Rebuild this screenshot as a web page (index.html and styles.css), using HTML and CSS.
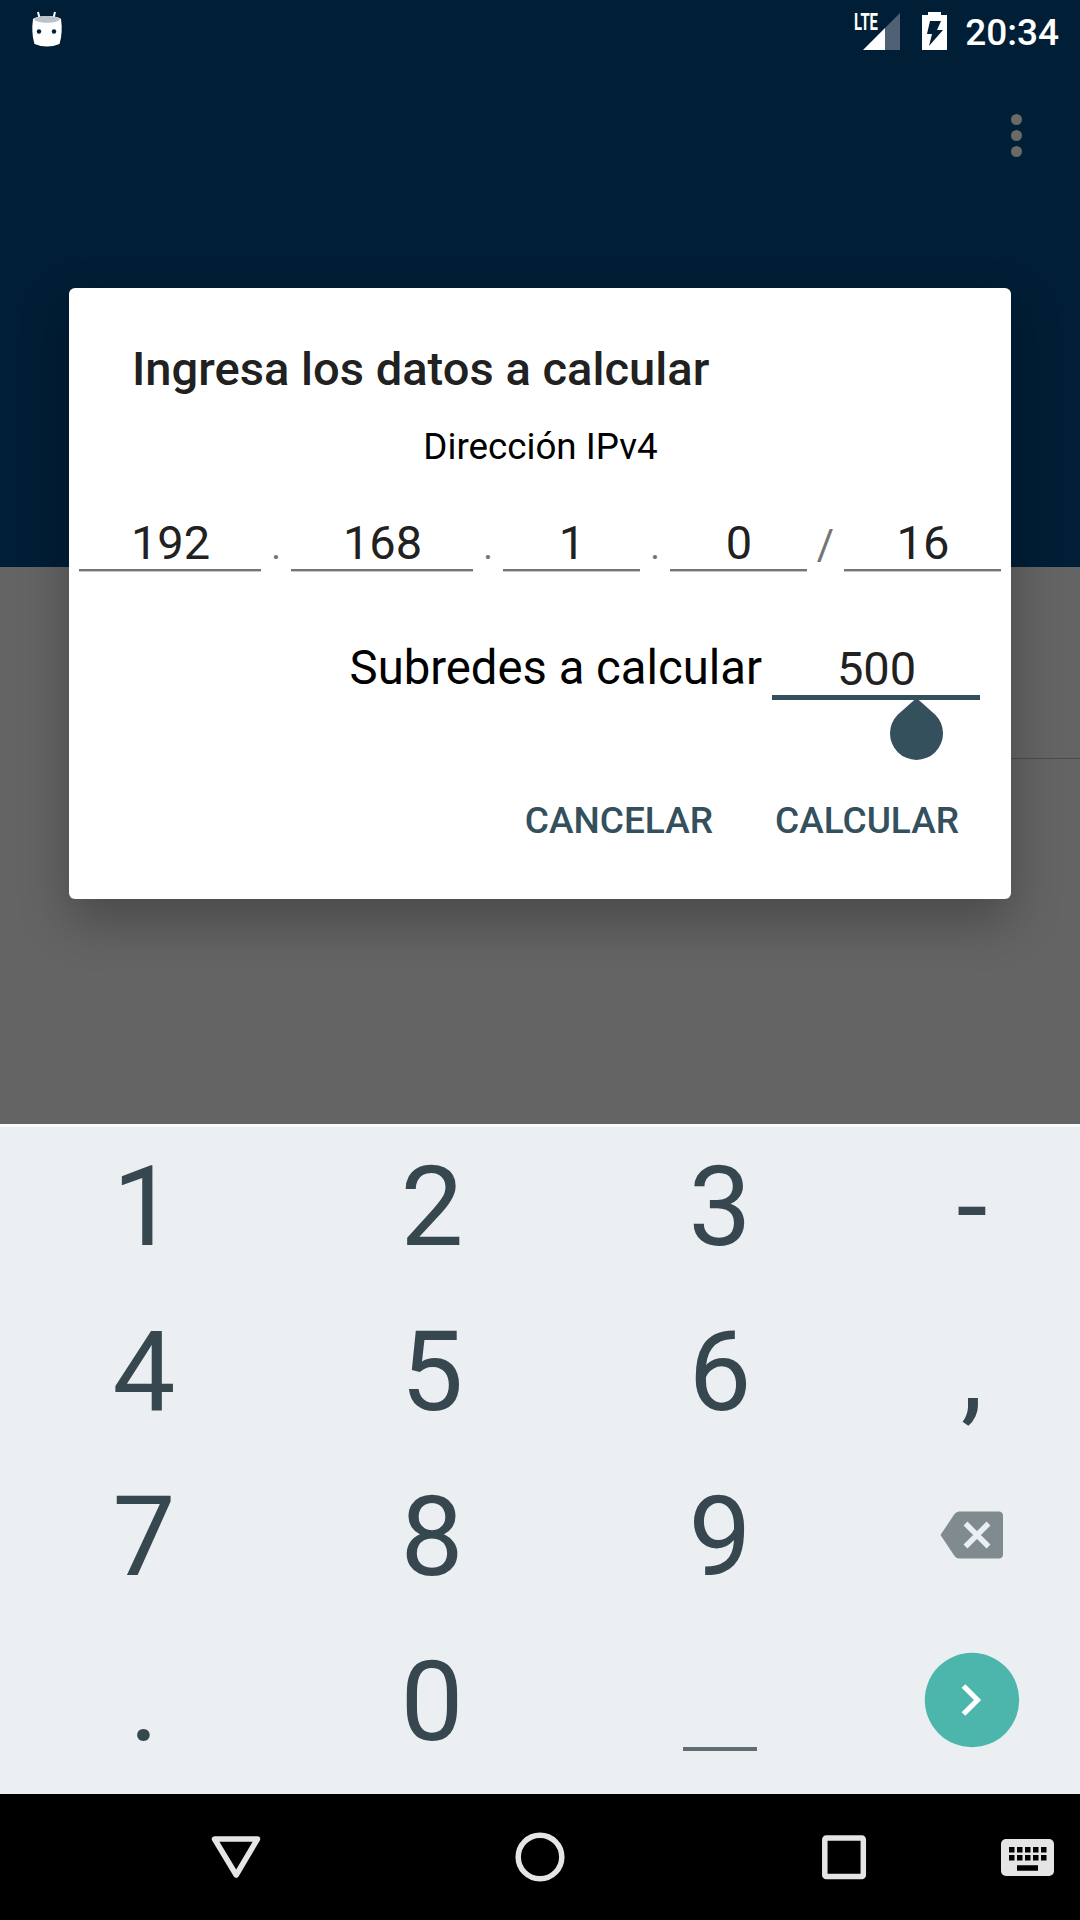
FILE: index.html
```
<!DOCTYPE html>
<html lang="es">
<head>
    <meta charset="UTF-8">
    <meta name="viewport" content="width=device-width, initial-scale=1.0">
    <title>Calculadora IPv4</title>
    <link rel="stylesheet" href="styles.css">
</head>
<body>

    <div class="screen">
        <header class="app-header">
            <div class="status-bar">
                <svg class="droid" width="32" height="38" viewBox="0 0 32 38">
                    <path d="M7 1l2 8M24 1l-2 8" stroke="#fff" stroke-width="2" fill="none"/>
                    <path d="M2 8C6 4 26 4 30 8Q32 22 28.500 33Q16 38 3.500 33Q0 22 2 8z" fill="#fff"/>
                    <path d="M3 8C8 4 24 4 29 8C28 13 4 13 3 8z" fill="#bbc3ca"/>
                    <circle cx="8" cy="20.500" r="2.200" fill="#001e36"/>
                    <circle cx="23" cy="20.500" r="2.200" fill="#001e36"/>
                </svg>
                <div class="status-right">
                    <svg class="signal" width="50" height="40" viewBox="0 0 50 40">
                        <path d="M11 39L33 17V39z" fill="#fff"/>
                        <path d="M33 17L48 2V39H33z" fill="#4f6273"/>
                        <text class="lte" x="2" y="18.500" textLength="24" lengthAdjust="spacingAndGlyphs">LTE</text>
                    </svg>
                    <svg class="battery" width="25" height="38" viewBox="0 0 25 38">
                        <path d="M0 3h6V0h13v3h6v35H0z" fill="#fff"/>
                        <path d="M8 9h11l-4 9h6L7 34l3-12H5z" fill="#001e36"/>
                    </svg>
                    <span class="clock">20:34</span>
                </div>
            </div>
            <div class="toolbar">
                <div class="menu"><i></i><i></i><i></i></div>
            </div>
        </header>

        <main class="content">
            <div class="divider"></div>
        </main>

        <div class="keyboard">
            <span>1</span><span>2</span><span>3</span><span>-</span>
            <span>4</span><span>5</span><span>6</span><span>,</span>
            <span>7</span><span>8</span><span>9</span>
            <span class="key-icon">
                <svg width="64" height="48" viewBox="0 0 64 48">
                    <path d="M19 .500H58.500Q63 .500 63 5V43Q63 47.500 58.500 47.500H19Q16.500 47.500 14.500 45L.500 24L14.500 3Q16.500 .500 19 .500z" fill="#808b8f"/>
                    <path d="M25.500 12.500L48.500 35.500M48.500 12.500L25.500 35.500" stroke="#ebeff2" stroke-width="5.500"/>
                </svg>
            </span>
            <span>.</span><span>0</span>
            <span class="key-icon"><i class="space"></i></span>
            <span class="key-icon">
                <svg width="96" height="96" viewBox="0 0 96 96">
                    <circle cx="48" cy="48" r="47.200" fill="#4db6ac"/>
                    <path d="M39.500 34L53.500 48L39.500 62" stroke="#fff" stroke-width="5.200" fill="none"/>
                </svg>
            </span>
        </div>

        <nav class="nav-bar">
            <svg width="1080" height="126" viewBox="0 0 1080 126">
                <g fill="none" stroke="#e5e5e5" stroke-width="5.500" stroke-linejoin="round">
                    <path d="M214.500 45H257.500L236.200 81z"/>
                    <circle cx="540" cy="63" r="21.800"/>
                    <rect x="824.800" y="44" width="38.500" height="38.500" rx="1.500"/>
                </g>
                <rect x="1001" y="45" width="53" height="37" rx="5" fill="#e5e5e5"/>
                <g stroke="#000" stroke-width="5.500">
                    <path d="M1009 55.700h37.500M1009 63.700h37.500" stroke-dasharray="5.500 2.500"/>
                    <path d="M1017 74h21"/>
                </g>
            </svg>
        </nav>

        <form class="dialog">
            <h2>Ingresa los datos a calcular</h2>
            <p class="subtitle">Dirección IPv4</p>
            <div class="ip-row">
                <input type="text" value="192">
                <span>.</span>
                <input type="text" value="168">
                <span>.</span>
                <input type="text" value="1">
                <span>.</span>
                <input type="text" value="0">
                <span class="slash">/</span>
                <input type="text" value="16">
            </div>
            <div class="subnet-row">
                <label for="subnets">Subredes a calcular</label>
                <div class="subnet-field">
                    <input type="text" id="subnets" class="focused" value="500">
                    <svg class="handle" width="54" height="62" viewBox="0 0 54 62">
                        <path d="M26.500 0L45.300 16.700A26.500 26.500 0 1 1 7.700 16.700z" fill="#33505c"/>
                    </svg>
                </div>
            </div>
            <div class="actions">
                <button type="button">CANCELAR</button>
                <button type="button">CALCULAR</button>
            </div>
        </form>
    </div>

</body>
</html>
```
FILE: styles.css
```
* {
    box-sizing: border-box;
}
body {
    margin: 0;
    font-family: Roboto, "Liberation Sans", sans-serif;
}
.screen {
    position: relative;
    display: flex;
    flex-direction: column;
    width: 1080px;
    height: 1920px;
    overflow: hidden;
    background-color: #646464;
}

/* header */
.app-header {
    height: 567px;
    background-color: #001e36;
}
.status-bar {
    display: flex;
    justify-content: space-between;
    height: 63px;
    padding: 11px 21px 0 31px;
}
.status-right {
    display: flex;
}
.signal {
    overflow: visible;
}
.lte {
    font-size: 23px;
    font-weight: bold;
    fill: #fff;
}
.battery {
    margin: 1px 18px 0 20px;
}
.clock {
    color: #fff;
    font-size: 37px;
    font-weight: 500;
    line-height: 44px;
}
.toolbar {
    display: flex;
    justify-content: flex-end;
    padding: 51px 58px 0 0;
}
.menu {
    display: flex;
    flex-direction: column;
    gap: 5px;
}
.menu i {
    width: 11px;
    height: 11px;
    border-radius: 50%;
    background-color: #6a6a69;
}
.content {
    height: 557px;
    padding: 191px 0 0 189px;
}
.divider {
    height: 1px;
    background-color: #4b4b4b;
}

/* keyboard */
.keyboard {
    display: grid;
    grid-template-columns: 288px 288px 288px 216px;
    grid-auto-rows: 165px;
    height: 670px;
    border-top: 3px solid #f9fafb;
    background-color: #ebeff2;
    color: #37474f;
    font-size: 112px;
    line-height: 159px;
    text-align: center;
}
.keyboard .key-icon {
    display: flex;
    justify-content: center;
    align-items: center;
    padding-bottom: 10px;
}
.space {
    width: 74px;
    height: 4px;
    margin-top: 98px;
    background-color: #5f6c73;
}
.nav-bar {
    height: 126px;
    background-color: #000;
}

/* dialog */
.dialog {
    position: absolute;
    top: 288px;
    left: 69px;
    width: 942px;
    height: 611px;
    padding: 51px 10px 0;
    border-radius: 6px;
    background-color: #fff;
    box-shadow: 0 22px 50px rgba(0, 0, 0, 0.27);
}
h2 {
    margin: 0 0 24px 53px;
    color: #212121;
    font-size: 47.100px;
    font-weight: 500;
    line-height: 60px;
}
.subtitle {
    margin: 0 0 46px;
    font-size: 36.750px;
    line-height: 48px;
    text-align: center;
    text-indent: 1px;
}
input {
    display: block;
    width: 100%;
    height: 54px;
    padding: 0 0 2px;
    border: none;
    border-bottom: 2px solid #757575;
    outline: none;
    background: none;
    box-shadow: 0 1px #c6c6c6;
    color: #212121;
    font-family: inherit;
    font-size: 47px;
    line-height: 50px;
    text-align: center;
    text-indent: 1px;
}
.ip-row {
    display: grid;
    grid-template-columns: 182px 30px 182px 30px 137px 30px 137px 37px 157px;
    align-items: baseline;
    height: 55px;
    color: #757575;
    font-size: 36.750px;
    line-height: 50px;
    text-align: center;
}
.ip-row .slash {
    font-size: 42px;
}
.subnet-row {
    display: flex;
    justify-content: flex-end;
    margin-top: 71px;
    padding-right: 21px;
}
.subnet-row label {
    margin-right: 10px;
    font-size: 47.250px;
    line-height: 51px;
}
.subnet-field {
    position: relative;
    width: 208px;
}
.focused {
    height: 57px;
    border-bottom: 5px solid #33505c;
    box-shadow: none;
}
.handle {
    position: absolute;
    top: 55px;
    left: 118px;
}
.actions {
    display: flex;
    justify-content: flex-end;
    gap: 62px;
    margin-top: 101px;
    padding-right: 42px;
}
button {
    padding: 0;
    border: none;
    background: none;
    color: #33505c;
    font-family: inherit;
    font-size: 37px;
    font-weight: 500;
    line-height: 40px;
}
```
